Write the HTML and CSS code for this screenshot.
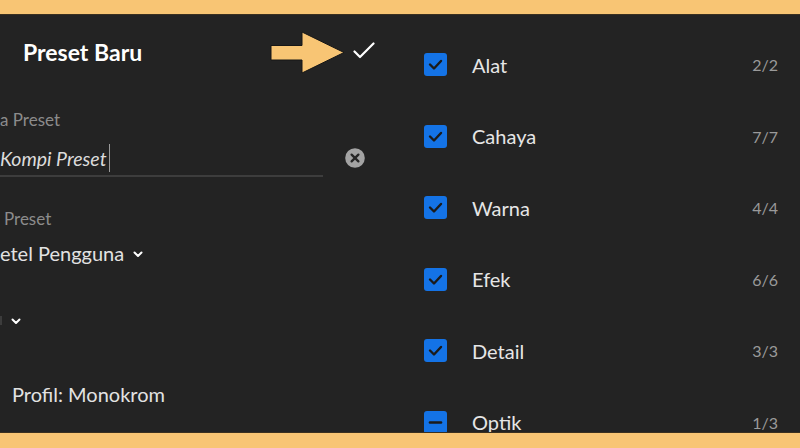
FILE: index.html
```html
<!DOCTYPE html>
<html lang="id">
<head>
<meta charset="utf-8">
<title>Preset Baru</title>
<link rel="stylesheet" href="styles.css">
</head>
<body>
<div class="frame">
  <div class="bar bar-top"></div>
  <main class="panel">
    <section class="left">
      <header class="head">
        <h1 class="title">Preset Baru</h1>
        <svg class="arrow" width="76" height="44" viewBox="0 0 76 44" aria-hidden="true">
          <path d="M1 14.5 H32 V1 L74 21.5 L32 42 V29 H1 Z" fill="#f8c574" stroke="#161616" stroke-width="1"/>
        </svg>
        <svg class="ok" width="22" height="18" viewBox="0 0 22 18" aria-hidden="true">
          <path d="M1.5 9.5 L7 15 L20.5 1.5" fill="none" stroke="#ffffff" stroke-width="2.2" stroke-linecap="round" stroke-linejoin="round"/>
        </svg>
      </header>
      <div class="form">
        <div class="label l1">a Preset</div>
        <div class="input-row">
          <div class="input"><span class="placeholder">Kompi Preset</span><span class="caret"></span></div>
          <svg class="clear" width="20" height="20" viewBox="0 0 20 20" aria-hidden="true">
            <circle cx="10" cy="10" r="9.8" fill="#a3a3a3"/>
            <path d="M6.6 6.6 L13.4 13.4 M13.4 6.6 L6.6 13.4" stroke="#262626" stroke-width="2.3" stroke-linecap="round"/>
          </svg>
        </div>
        <div class="label l2">Preset</div>
        <div class="select s1">etel Pengguna
          <svg class="chev" width="10" height="7" viewBox="0 0 10 7" aria-hidden="true"><path d="M1.5 1.5 L5 5 L8.5 1.5" fill="none" stroke="#fff" stroke-width="2" stroke-linecap="round" stroke-linejoin="round"/></svg>
        </div>
        <div class="select s2"><span class="stub"></span>
          <svg class="chev chev2" width="10" height="7" viewBox="0 0 10 7" aria-hidden="true"><path d="M1.5 1.5 L5 5 L8.5 1.5" fill="none" stroke="#fff" stroke-width="2" stroke-linecap="round" stroke-linejoin="round"/></svg>
        </div>
        <div class="option">Profil: Monokrom</div>
      </div>
    </section>
    <section class="right">
      <ul class="list">
        <li class="row"><span class="box"><svg width="23" height="23" viewBox="0 0 23 23"><path d="M6 11.5 L10 15.5 L17 8" fill="none" stroke="#1b1b1b" stroke-width="2.4" stroke-linecap="round" stroke-linejoin="round"/></svg></span><span class="name">Alat</span><span class="count">2/2</span></li>
        <li class="row"><span class="box"><svg width="23" height="23" viewBox="0 0 23 23"><path d="M6 11.5 L10 15.5 L17 8" fill="none" stroke="#1b1b1b" stroke-width="2.4" stroke-linecap="round" stroke-linejoin="round"/></svg></span><span class="name">Cahaya</span><span class="count">7/7</span></li>
        <li class="row"><span class="box"><svg width="23" height="23" viewBox="0 0 23 23"><path d="M6 11.5 L10 15.5 L17 8" fill="none" stroke="#1b1b1b" stroke-width="2.4" stroke-linecap="round" stroke-linejoin="round"/></svg></span><span class="name">Warna</span><span class="count">4/4</span></li>
        <li class="row"><span class="box"><svg width="23" height="23" viewBox="0 0 23 23"><path d="M6 11.5 L10 15.5 L17 8" fill="none" stroke="#1b1b1b" stroke-width="2.4" stroke-linecap="round" stroke-linejoin="round"/></svg></span><span class="name">Efek</span><span class="count">6/6</span></li>
        <li class="row"><span class="box"><svg width="23" height="23" viewBox="0 0 23 23"><path d="M6 11.5 L10 15.5 L17 8" fill="none" stroke="#1b1b1b" stroke-width="2.4" stroke-linecap="round" stroke-linejoin="round"/></svg></span><span class="name">Detail</span><span class="count">3/3</span></li>
        <li class="row"><span class="box"><svg width="23" height="23" viewBox="0 0 23 23"><path d="M6 11.5 H17" fill="none" stroke="#1b1b1b" stroke-width="2.6" stroke-linecap="round"/></svg></span><span class="name">Optik</span><span class="count">1/3</span></li>
      </ul>
    </section>
  </main>
  <div class="bar bar-bottom"></div>
</div>
</body>
</html>
```
FILE: styles.css
```css
* { box-sizing: border-box; }
html, body { margin: 0; padding: 0; }
body {
  width: 800px;
  height: 448px;
  overflow: hidden;
  background: #232323;
  font-family: "Lato", "Noto Sans", sans-serif;
  color: #e4e4e4;
}
.frame {
  width: 800px;
  height: 448px;
  display: flex;
  flex-direction: column;
}
.bar { background: #f8c574; flex: none; }
.bar-top { height: 15px; border-bottom: 1px solid #3a3020; }
.bar-bottom { height: 16px; border-top: 1px solid #3a3020; }
.panel {
  flex: 1;
  display: flex;
  min-height: 0;
  background: #232323;
}
.left {
  width: 400px;
  flex: none;
  overflow: hidden;
  display: flex;
  flex-direction: column;
}
.head {
  height: 74px;
  display: flex;
  align-items: center;
  padding: 0 25px 0 23px;
}
.title {
  margin: 0;
  font-size: 23px;
  font-weight: 700;
  color: #ffffff;
}
.arrow { margin-left: auto; margin-top: 1px; }
.ok { margin-left: 7px; margin-top: -2px; }
.form {
  display: flex;
  flex-direction: column;
}
.label {
  font-size: 17px;
  color: #8c8c8c;
  line-height: 20px;
}
.l1 { margin-top: 21px; }
.input-row {
  display: flex;
  margin-top: 13px;
}
.input {
  width: 323px;
  height: 34px;
  border-bottom: 2px solid #3d3d3d;
  display: flex;
  align-items: center;
  padding-bottom: 2px;
}
.placeholder {
  font-style: italic;
  font-size: 19.5px;
  color: #dcdcdc;
}
.caret {
  width: 1px;
  height: 28px;
  background: #9a9a9a;
  margin-left: 2px;
}
.clear { margin-left: 22px; margin-top: 5px; flex: none; }
.l2 { margin-top: 32px; padding-left: 4px; }
.select {
  font-size: 20px;
  line-height: 26px;
  height: 26px;
  color: #e2e2e2;
  display: flex;
  align-items: center;
}
.s1 { margin-top: 11px; }
.s2 { margin-top: 42px; }
.stub {
  width: 2px;
  height: 9px;
  background: #3c3c3c;
  margin-top: -2px;
}
.chev { margin-left: 9px; margin-top: 2px; }
.chev2 { margin-left: 9px; margin-top: 0; }
.option {
  font-size: 20px;
  line-height: 26px;
  color: #e2e2e2;
  margin-top: 47px;
  padding-left: 12px;
}
.right {
  flex: 1;
}
.list {
  list-style: none;
  margin: 0;
  padding: 14px 22px 0 24px;
}
.row {
  height: 71.5px;
  display: flex;
  align-items: center;
}
.box {
  width: 23px;
  height: 23px;
  border-radius: 3px;
  background: #1473e6;
  display: flex;
  flex: none;
}
.name {
  margin-left: 25px;
  flex: 1;
  font-size: 20px;
  color: #e6e6e6;
}
.count {
  font-size: 16px;
  color: #9a9a9a;
}
```
